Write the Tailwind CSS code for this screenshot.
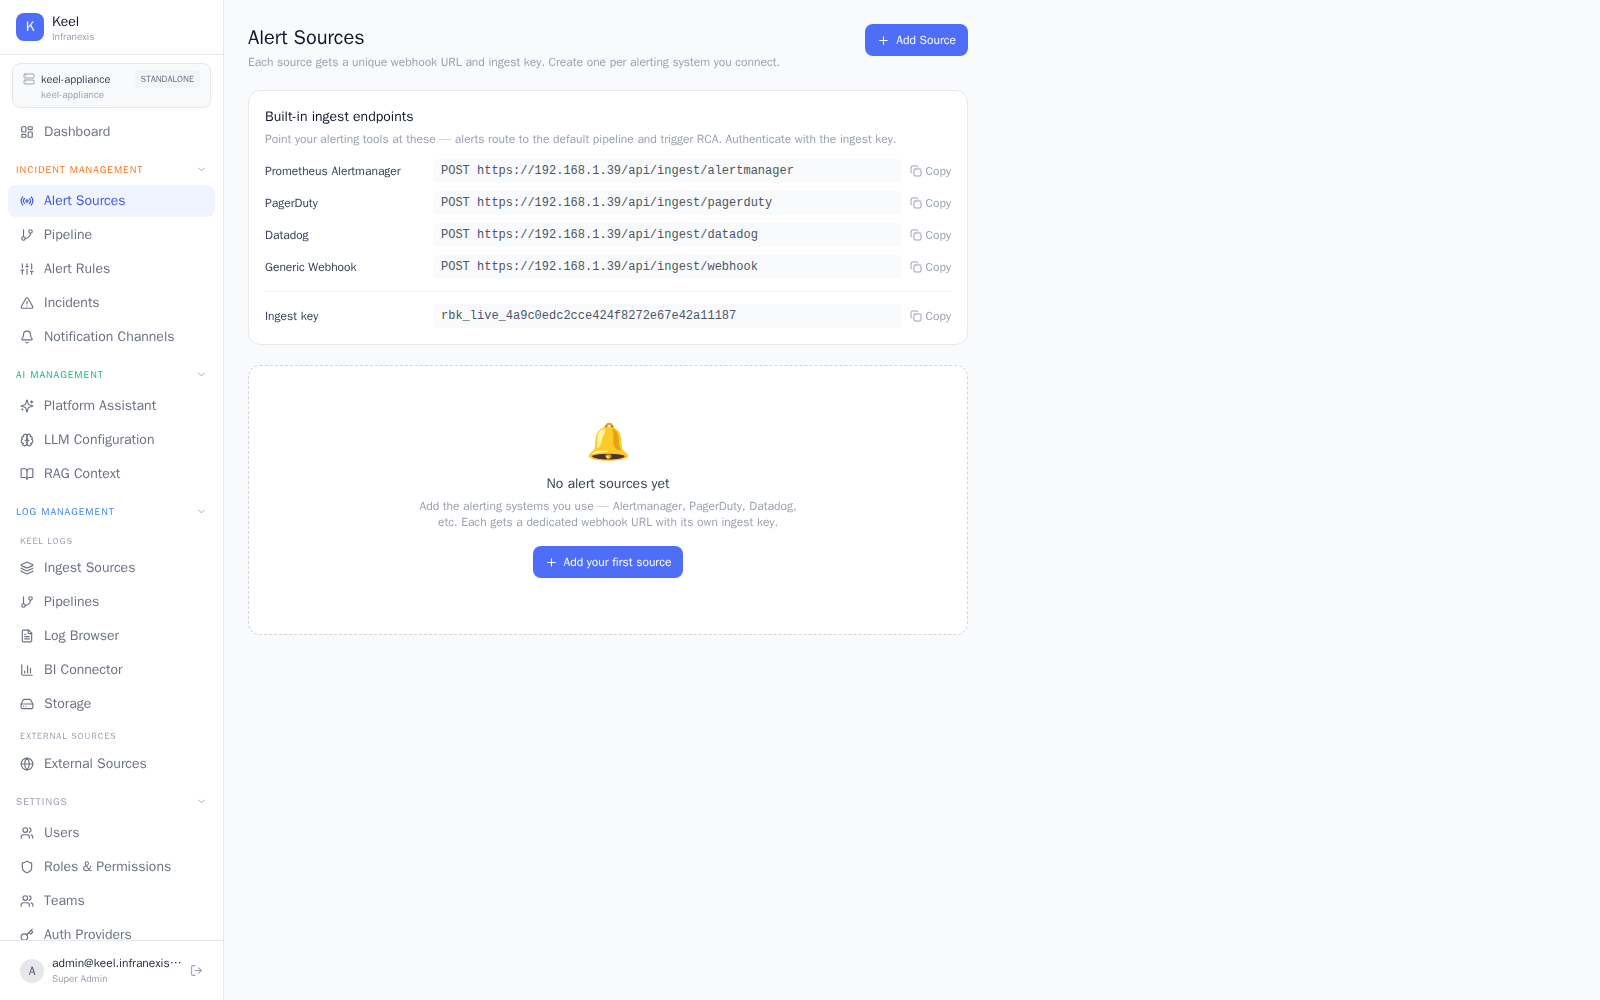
<!DOCTYPE html>
<html lang="en">
<head>
	<meta charset="UTF-8">
	<meta name="viewport" content="width=device-width, initial-scale=1.0">
	<title>Alert Sources - Keel</title>
	<script src="https://cdn.jsdelivr.net/npm/@tailwindcss/browser@4"></script>
</head>
<body class="flex h-screen overflow-hidden bg-gray-50 font-['WenQuanYi_Zen_Hei','Liberation_Sans',sans-serif] text-gray-900">
	<svg class="hidden">
		<symbol id="plus" viewBox="0 0 24 24"><path d="M5 12h14M12 5v14"/></symbol>
		<symbol id="chevron" viewBox="0 0 24 24"><path d="m6 9 6 6 6-6"/></symbol>
		<symbol id="copy" viewBox="0 0 24 24"><rect width="14" height="14" x="8" y="8" rx="2"/><path d="M4 16c-1.1 0-2-.9-2-2V4c0-1.1.9-2 2-2h10c1.1 0 2 .9 2 2"/></symbol>
		<symbol id="branch" viewBox="0 0 24 24"><path d="M6 3v12"/><circle cx="18" cy="6" r="3"/><circle cx="6" cy="18" r="3"/><path d="M18 9a9 9 0 0 1-9 9"/></symbol>
		<symbol id="users" viewBox="0 0 24 24"><path d="M16 21v-2a4 4 0 0 0-4-4H6a4 4 0 0 0-4 4v2"/><circle cx="9" cy="7" r="4"/><path d="M22 21v-2a4 4 0 0 0-3-3.87M16 3.13a4 4 0 0 1 0 7.75"/></symbol>
	</svg>

	<aside class="flex w-56 shrink-0 flex-col border-r border-gray-200 bg-white">
		<div class="flex items-center gap-2 border-b border-gray-200 px-4 py-3">
			<div class="flex size-7 items-center justify-center rounded-lg bg-[#4f6ef7] text-sm text-white">K</div>
			<div class="flex flex-col">
				<span class="text-sm leading-5">Keel</span>
				<span class="text-[10px] leading-[10px] text-gray-400">Infranexis</span>
			</div>
		</div>

		<div class="mx-3 mt-2 rounded-lg border border-gray-200 bg-gray-50 px-2.5 py-1.5">
			<div class="flex items-start gap-1.5">
				<svg class="mt-[3px] size-3 fill-none stroke-gray-400 stroke-2" viewBox="0 0 24 24" stroke-linecap="round" stroke-linejoin="round"><rect width="20" height="8" x="2" y="2" rx="2"/><rect width="20" height="8" x="2" y="14" rx="2"/><path d="M6 6h.01M6 18h.01"/></svg>
				<span class="grow text-[11px] leading-[18px] text-gray-700">keel-appliance</span>
				<span class="rounded bg-gray-100 px-1.5 text-[9px] leading-[18px] text-gray-500">STANDALONE</span>
			</div>
			<div class="pl-[18px] text-[10px] leading-[13px] text-gray-400">keel-appliance</div>
		</div>

		<nav class="grow overflow-x-hidden overflow-y-auto px-2 py-2 text-sm text-gray-500 [scrollbar-width:none]">
			<a href="#" class="flex h-8 items-center gap-2.5 rounded-lg px-3">
				<svg class="size-3.5 fill-none stroke-current stroke-2" viewBox="0 0 24 24" stroke-linecap="round" stroke-linejoin="round"><rect width="7" height="9" x="3" y="3" rx="1"/><rect width="7" height="5" x="14" y="3" rx="1"/><rect width="7" height="9" x="14" y="12" rx="1"/><rect width="7" height="5" x="3" y="16" rx="1"/></svg>
				Dashboard
			</a>

			<button class="mt-1.5 flex w-full items-center justify-between px-2 py-2 text-[10px] leading-[15px] tracking-widest text-[#f97316]">
				INCIDENT MANAGEMENT
				<svg class="size-[11px] fill-none stroke-gray-400 stroke-2" stroke-linecap="round" stroke-linejoin="round"><use href="#chevron"/></svg>
			</button>
			<div class="flex flex-col gap-0.5">
				<a href="#" class="flex h-8 items-center gap-2.5 rounded-lg bg-[#f0f4ff] px-3 text-[#3b5bdb]">
					<svg class="size-3.5 fill-none stroke-current stroke-2" viewBox="0 0 24 24" stroke-linecap="round" stroke-linejoin="round"><path d="M4.9 19.1C1 15.2 1 8.8 4.9 4.9"/><path d="M7.8 16.2c-2.3-2.3-2.3-6.1 0-8.5"/><circle cx="12" cy="12" r="2"/><path d="M16.2 7.8c2.3 2.3 2.3 6.1 0 8.5"/><path d="M19.1 4.9C23 8.8 23 15.1 19.1 19"/></svg>
					Alert Sources
				</a>
				<a href="#" class="flex h-8 items-center gap-2.5 rounded-lg px-3">
					<svg class="size-3.5 fill-none stroke-current stroke-2" stroke-linecap="round" stroke-linejoin="round"><use href="#branch"/></svg>
					Pipeline
				</a>
				<a href="#" class="flex h-8 items-center gap-2.5 rounded-lg px-3">
					<svg class="size-3.5 fill-none stroke-current stroke-2" viewBox="0 0 24 24" stroke-linecap="round" stroke-linejoin="round"><path d="M4 21v-7M4 10V3M12 21v-9M12 8V3M20 21v-5M20 12V3M2 14h4M10 8h4M18 16h4"/></svg>
					Alert Rules
				</a>
				<a href="#" class="flex h-8 items-center gap-2.5 rounded-lg px-3">
					<svg class="size-3.5 fill-none stroke-current stroke-2" viewBox="0 0 24 24" stroke-linecap="round" stroke-linejoin="round"><path d="m21.73 18-8-14a2 2 0 0 0-3.48 0l-8 14A2 2 0 0 0 4 21h16a2 2 0 0 0 1.73-3"/><path d="M12 9v4M12 17h.01"/></svg>
					Incidents
				</a>
				<a href="#" class="flex h-8 items-center gap-2.5 rounded-lg px-3">
					<svg class="size-3.5 fill-none stroke-current stroke-2" viewBox="0 0 24 24" stroke-linecap="round" stroke-linejoin="round"><path d="M10.268 21a2 2 0 0 0 3.464 0"/><path d="M3.262 15.326A1 1 0 0 0 4 17h16a1 1 0 0 0 .74-1.673C19.41 13.956 18 12.499 18 8A6 6 0 0 0 6 8c0 4.499-1.411 5.956-2.738 7.326"/></svg>
					Notification Channels
				</a>
			</div>

			<button class="mt-1.5 flex w-full items-center justify-between px-2 py-2 text-[10px] leading-[15px] tracking-widest text-[#10b981]">
				AI MANAGEMENT
				<svg class="size-[11px] fill-none stroke-gray-400 stroke-2" stroke-linecap="round" stroke-linejoin="round"><use href="#chevron"/></svg>
			</button>
			<div class="flex flex-col gap-0.5">
				<a href="#" class="flex h-8 items-center gap-2.5 rounded-lg px-3">
					<svg class="size-3.5 fill-none stroke-current stroke-2" viewBox="0 0 24 24" stroke-linecap="round" stroke-linejoin="round"><path d="M9.937 15.5A2 2 0 0 0 8.5 14.063l-6.135-1.582a.5.5 0 0 1 0-.962L8.5 9.936A2 2 0 0 0 9.937 8.5l1.582-6.135a.5.5 0 0 1 .963 0L14.063 8.5A2 2 0 0 0 15.5 9.937l6.135 1.581a.5.5 0 0 1 0 .964L15.5 14.063a2 2 0 0 0-1.437 1.437l-1.582 6.135a.5.5 0 0 1-.963 0z"/><path d="M20 3v4M22 5h-4M4 17v2M5 18H3"/></svg>
					Platform Assistant
				</a>
				<a href="#" class="flex h-8 items-center gap-2.5 rounded-lg px-3">
					<svg class="size-3.5 fill-none stroke-current stroke-2" viewBox="0 0 24 24" stroke-linecap="round" stroke-linejoin="round"><path d="M12 5a3 3 0 1 0-5.997.125 4 4 0 0 0-2.526 5.77 4 4 0 0 0 .556 6.588A4 4 0 1 0 12 18Z"/><path d="M12 5a3 3 0 1 1 5.997.125 4 4 0 0 1 2.526 5.77 4 4 0 0 1-.556 6.588A4 4 0 1 1 12 18Z"/><path d="M15 13a4.5 4.5 0 0 1-3-4 4.5 4.5 0 0 1-3 4"/><path d="M17.599 6.5a3 3 0 0 0 .399-1.375M6.003 5.125A3 3 0 0 0 6.401 6.5M3.477 10.896a4 4 0 0 1 .585-.396M19.938 10.5a4 4 0 0 1 .585.396M6 18a4 4 0 0 1-1.967-.516M19.967 17.484A4 4 0 0 1 18 18"/></svg>
					LLM Configuration
				</a>
				<a href="#" class="flex h-8 items-center gap-2.5 rounded-lg px-3">
					<svg class="size-3.5 fill-none stroke-current stroke-2" viewBox="0 0 24 24" stroke-linecap="round" stroke-linejoin="round"><path d="M12 7v14"/><path d="M3 18a1 1 0 0 1-1-1V4a1 1 0 0 1 1-1h5a4 4 0 0 1 4 4 4 4 0 0 1 4-4h5a1 1 0 0 1 1 1v13a1 1 0 0 1-1 1h-6a3 3 0 0 0-3 3 3 3 0 0 0-3-3z"/></svg>
					RAG Context
				</a>
			</div>

			<button class="mt-1.5 flex w-full items-center justify-between px-2 py-2 text-[10px] leading-[15px] tracking-widest text-[#3b82f6]">
				LOG MANAGEMENT
				<svg class="size-[11px] fill-none stroke-gray-400 stroke-2" stroke-linecap="round" stroke-linejoin="round"><use href="#chevron"/></svg>
			</button>
			<div class="flex flex-col gap-0.5">
				<p class="px-3 pt-2 pb-[3px] text-[9px] leading-3 tracking-widest text-gray-400">KEEL LOGS</p>
				<a href="#" class="flex h-8 items-center gap-2.5 rounded-lg px-3">
					<svg class="size-3.5 fill-none stroke-current stroke-2" viewBox="0 0 24 24" stroke-linecap="round" stroke-linejoin="round"><path d="M12.83 2.18a2 2 0 0 0-1.66 0L2.6 6.08a1 1 0 0 0 0 1.83l8.58 3.91a2 2 0 0 0 1.66 0l8.58-3.9a1 1 0 0 0 0-1.83z"/><path d="M2 12a1 1 0 0 0 .58.91l8.6 3.91a2 2 0 0 0 1.65 0l8.58-3.9A1 1 0 0 0 22 12"/><path d="M2 17a1 1 0 0 0 .58.91l8.6 3.91a2 2 0 0 0 1.65 0l8.58-3.9A1 1 0 0 0 22 17"/></svg>
					Ingest Sources
				</a>
				<a href="#" class="flex h-8 items-center gap-2.5 rounded-lg px-3">
					<svg class="size-3.5 fill-none stroke-current stroke-2" stroke-linecap="round" stroke-linejoin="round"><use href="#branch"/></svg>
					Pipelines
				</a>
				<a href="#" class="flex h-8 items-center gap-2.5 rounded-lg px-3">
					<svg class="size-3.5 fill-none stroke-current stroke-2" viewBox="0 0 24 24" stroke-linecap="round" stroke-linejoin="round"><path d="M15 2H6a2 2 0 0 0-2 2v16a2 2 0 0 0 2 2h12a2 2 0 0 0 2-2V7Z"/><path d="M14 2v4a2 2 0 0 0 2 2h4M10 9H8M16 13H8M16 17H8"/></svg>
					Log Browser
				</a>
				<a href="#" class="flex h-8 items-center gap-2.5 rounded-lg px-3">
					<svg class="size-3.5 fill-none stroke-current stroke-2" viewBox="0 0 24 24" stroke-linecap="round" stroke-linejoin="round"><path d="M3 3v16a2 2 0 0 0 2 2h16M18 17V9M13 17V5M8 17v-3"/></svg>
					BI Connector
				</a>
				<a href="#" class="flex h-8 items-center gap-2.5 rounded-lg px-3">
					<svg class="size-3.5 fill-none stroke-current stroke-2" viewBox="0 0 24 24" stroke-linecap="round" stroke-linejoin="round"><path d="M22 12H2"/><path d="M5.45 5.11 2 12v6a2 2 0 0 0 2 2h16a2 2 0 0 0 2-2v-6l-3.45-6.89A2 2 0 0 0 16.76 4H7.24a2 2 0 0 0-1.79 1.11z"/><path d="M6 16h.01M10 16h.01"/></svg>
					Storage
				</a>
				<p class="px-3 pt-2 pb-1 text-[9px] leading-3 tracking-widest text-gray-400">EXTERNAL SOURCES</p>
				<a href="#" class="flex h-8 items-center gap-2.5 rounded-lg px-3">
					<svg class="size-3.5 fill-none stroke-current stroke-2" viewBox="0 0 24 24" stroke-linecap="round" stroke-linejoin="round"><circle cx="12" cy="12" r="10"/><path d="M12 2a14.5 14.5 0 0 0 0 20 14.5 14.5 0 0 0 0-20M2 12h20"/></svg>
					External Sources
				</a>
			</div>

			<button class="mt-1.5 flex w-full items-center justify-between px-2 py-2 text-[10px] leading-[15px] tracking-widest text-gray-400">
				SETTINGS
				<svg class="size-[11px] fill-none stroke-gray-400 stroke-2" stroke-linecap="round" stroke-linejoin="round"><use href="#chevron"/></svg>
			</button>
			<div class="flex flex-col gap-0.5">
				<a href="#" class="flex h-8 items-center gap-2.5 rounded-lg px-3">
					<svg class="size-3.5 fill-none stroke-current stroke-2" stroke-linecap="round" stroke-linejoin="round"><use href="#users"/></svg>
					Users
				</a>
				<a href="#" class="flex h-8 items-center gap-2.5 rounded-lg px-3">
					<svg class="size-3.5 fill-none stroke-current stroke-2" viewBox="0 0 24 24" stroke-linecap="round" stroke-linejoin="round"><path d="M20 13c0 5-3.5 7.5-7.66 8.95a1 1 0 0 1-.67-.01C7.5 20.5 4 18 4 13V6a1 1 0 0 1 1-1c2 0 4.5-1.2 6.24-2.72a1.17 1.17 0 0 1 1.52 0C14.51 3.81 17 5 19 5a1 1 0 0 1 1 1z"/></svg>
					Roles &amp; Permissions
				</a>
				<a href="#" class="flex h-8 items-center gap-2.5 rounded-lg px-3">
					<svg class="size-3.5 fill-none stroke-current stroke-2" stroke-linecap="round" stroke-linejoin="round"><use href="#users"/></svg>
					Teams
				</a>
				<a href="#" class="flex h-8 items-center gap-2.5 rounded-lg px-3">
					<svg class="size-3.5 fill-none stroke-current stroke-2" viewBox="0 0 24 24" stroke-linecap="round" stroke-linejoin="round"><path d="m15.5 7.5 2.3 2.3a1 1 0 0 0 1.4 0l2.1-2.1a1 1 0 0 0 0-1.4L19 4M21 2l-9.6 9.6"/><circle cx="7.5" cy="15.5" r="5.5"/></svg>
					Auth Providers
				</a>
			</div>
		</nav>

		<div class="flex h-[60px] shrink-0 items-center gap-2 border-t border-gray-200 px-5">
			<div class="flex size-6 shrink-0 items-center justify-center rounded-full bg-gray-200 text-xs text-gray-600">A</div>
			<div class="flex min-w-0 grow flex-col">
				<span class="truncate text-xs text-gray-800">admin@keel.infranexis.local</span>
				<span class="text-[10px] leading-[15px] text-gray-400">Super Admin</span>
			</div>
			<button aria-label="Log out" class="text-gray-400">
				<svg class="size-[13px] fill-none stroke-current stroke-2" viewBox="0 0 24 24" stroke-linecap="round" stroke-linejoin="round"><path d="M9 21H5a2 2 0 0 1-2-2V5a2 2 0 0 1 2-2h4M16 17l5-5-5-5M21 12H9"/></svg>
			</button>
		</div>
	</aside>

	<main class="grow overflow-y-auto p-6">
		<div class="max-w-[720px]">
			<div class="mb-5 flex items-start justify-between">
				<div>
					<h1 class="text-xl">Alert Sources</h1>
					<p class="mt-0.5 text-xs text-gray-400">Each source gets a unique webhook URL and ingest key. Create one per alerting system you connect.</p>
				</div>
				<button class="flex items-center gap-1.5 rounded-lg bg-[#4f6ef7] px-3 py-2 text-xs text-white">
					<svg class="size-[13px] fill-none stroke-current stroke-2" stroke-linecap="round"><use href="#plus"/></svg>
					Add Source
				</button>
			</div>

			<section class="mb-5 rounded-xl border border-gray-200 bg-white p-4">
				<h2 class="text-sm">Built-in ingest endpoints</h2>
				<p class="mt-1 text-xs text-gray-400">Point your alerting tools at these — alerts route to the default pipeline and trigger RCA. Authenticate with the ingest key.</p>
				<div class="mt-3 flex flex-col gap-2 text-xs text-gray-700">
					<div class="flex items-center gap-2">
						<span class="w-40">Prometheus Alertmanager</span>
						<code class="grow rounded bg-gray-50 px-2 py-1 font-['Liberation_Mono',monospace] text-gray-600">POST https://192.168.1.39/api/ingest/alertmanager</code>
						<button class="copy flex items-center gap-1 text-gray-400"><svg class="size-3 fill-none stroke-current stroke-2" stroke-linecap="round" stroke-linejoin="round"><use href="#copy"/></svg>Copy</button>
					</div>
					<div class="flex items-center gap-2">
						<span class="w-40">PagerDuty</span>
						<code class="grow rounded bg-gray-50 px-2 py-1 font-['Liberation_Mono',monospace] text-gray-600">POST https://192.168.1.39/api/ingest/pagerduty</code>
						<button class="copy flex items-center gap-1 text-gray-400"><svg class="size-3 fill-none stroke-current stroke-2" stroke-linecap="round" stroke-linejoin="round"><use href="#copy"/></svg>Copy</button>
					</div>
					<div class="flex items-center gap-2">
						<span class="w-40">Datadog</span>
						<code class="grow rounded bg-gray-50 px-2 py-1 font-['Liberation_Mono',monospace] text-gray-600">POST https://192.168.1.39/api/ingest/datadog</code>
						<button class="copy flex items-center gap-1 text-gray-400"><svg class="size-3 fill-none stroke-current stroke-2" stroke-linecap="round" stroke-linejoin="round"><use href="#copy"/></svg>Copy</button>
					</div>
					<div class="flex items-center gap-2">
						<span class="w-40">Generic Webhook</span>
						<code class="grow rounded bg-gray-50 px-2 py-1 font-['Liberation_Mono',monospace] text-gray-600">POST https://192.168.1.39/api/ingest/webhook</code>
						<button class="copy flex items-center gap-1 text-gray-400"><svg class="size-3 fill-none stroke-current stroke-2" stroke-linecap="round" stroke-linejoin="round"><use href="#copy"/></svg>Copy</button>
					</div>
				</div>
				<div class="mt-3 flex items-center gap-2 border-t border-gray-100 pt-3 text-xs text-gray-700">
					<span class="w-40">Ingest key</span>
					<code class="grow rounded bg-gray-50 px-2 py-1 font-['Liberation_Mono',monospace] text-gray-600">rbk_live_4a9c0edc2cce424f8272e67e42a11187</code>
					<button class="copy flex items-center gap-1 text-gray-400"><svg class="size-3 fill-none stroke-current stroke-2" stroke-linecap="round" stroke-linejoin="round"><use href="#copy"/></svg>Copy</button>
				</div>
			</section>

			<section class="flex flex-col items-center rounded-xl border border-dashed border-gray-300 bg-white py-14 text-center">
				<div class="mb-3 text-4xl">🔔</div>
				<h3 class="mb-1 text-sm text-gray-700">No alert sources yet</h3>
				<p class="mb-4 max-w-sm text-xs text-gray-400">Add the alerting systems you use — Alertmanager, PagerDuty, Datadog, etc. Each gets a dedicated webhook URL with its own ingest key.</p>
				<button class="flex items-center gap-1.5 rounded-lg bg-[#4f6ef7] px-3 py-2 text-xs text-white">
					<svg class="size-[13px] fill-none stroke-current stroke-2" stroke-linecap="round"><use href="#plus"/></svg>
					Add your first source
				</button>
			</section>
		</div>
	</main>

	<script>
		document.querySelectorAll(".copy").forEach(button => {
			button.addEventListener("click", () => {
				const text = button.previousElementSibling.innerText
				navigator.clipboard?.writeText(text.replace("POST ", ""))
			})
		})
	</script>
</body>
</html>
